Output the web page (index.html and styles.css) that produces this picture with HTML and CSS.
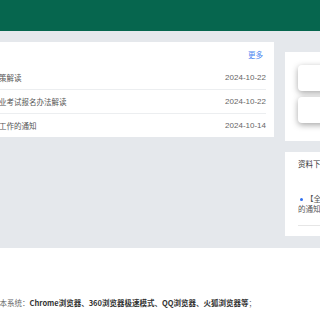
FILE: index.html
```html
<!DOCTYPE html>
<html lang="zh-CN">
<head>
<meta charset="utf-8">
<link rel="stylesheet" href="styles.css">
</head>
<body>
<div class="page">
  <header class="topbar"></header>
  <div class="main">
    <section class="news">
      <div class="news-head"><a class="more">更多</a></div>
      <div class="row"><span class="title">关于招生新政策解读</span><span class="date">2024-10-22</span></div>
      <div class="row"><span class="title">关于专升本专业考试报名办法解读</span><span class="date">2024-10-22</span></div>
      <div class="row"><span class="title">关于做好报名工作的通知</span><span class="date">2024-10-14</span></div>
    </section>
    <aside class="side">
      <div class="panel btns">
        <div class="btn"></div>
        <div class="btn"></div>
      </div>
      <div class="panel downloads">
        <div class="panel-title">资料下载</div>
        <div class="item"><span class="dot"></span>【全国】关于报名<br>的通知</div>
      </div>
    </aside>
  </div>
  <footer class="foot">
    <p class="tip">建议使用以下浏览器访问本系统：<b>Chrome浏览器、360浏览器极速模式、QQ浏览器、火狐浏览器等</b>；</p>
  </footer>
</div>
</body>
</html>
```

FILE: styles.css
```css
html, body {
  margin: 0;
  padding: 0;
  background: #ffffff;
  overflow: hidden;
  font-family: "Noto Sans CJK SC", "Noto Sans", sans-serif;
  font-size: 7.5px;
}
.page {
  width: 560px;
  margin-left: -100px;
}
.topbar {
  height: 31px;
  background: #06664e;
}
.main {
  background: #e5e8ec;
  display: flex;
  gap: 11px;
  padding: 11px 0 12px 40px;
}
.news {
  width: 334px;
  flex: none;
  background: #fff;
  padding: 0 8px 0 14px;
  box-sizing: border-box;
  align-self: flex-start;
}
.news-head {
  height: 24px;
  display: flex;
  justify-content: flex-end;
  align-items: center;
  padding-right: 3px;
}
.more {
  color: #4b86f0;
  font-size: 7.5px;
}
.row {
  height: 23px;
  display: flex;
  justify-content: space-between;
  align-items: center;
  border-bottom: 1px solid #eceef0;
  color: #555;
}
.row:last-child {
  border-bottom: none;
}
.date {
  color: #666;
  font-family: "Liberation Sans", sans-serif;
  font-size: 8px;
}
.side {
  flex: 1;
  display: flex;
  flex-direction: column;
  gap: 11px;
  margin-top: 10px;
}
.panel {
  background: #fff;
  padding-left: 13px;
}
.btns {
  padding-top: 13px;
  padding-bottom: 18px;
  display: flex;
  flex-direction: column;
  gap: 6px;
}
.btn {
  height: 26px;
  background: #fff;
  border-radius: 4px;
  box-shadow: 0 2px 6px rgba(0, 0, 0, 0.35);
}
.downloads {
  padding-top: 7px;
  padding-bottom: 10px;
  padding-right: 20px;
}
.panel-title {
  line-height: 10px;
  color: #333;
  font-size: 7.5px;
}
.item {
  margin-top: 25px;
  line-height: 10px;
  color: #555;
  padding-bottom: 11px;
  border-bottom: 1px solid #e6e6e6;
  white-space: nowrap;
}
.dot {
  display: inline-block;
  width: 3px;
  height: 3px;
  border-radius: 50%;
  background: #2f6ff0;
  margin: 0 3px 1px 2px;
  vertical-align: middle;
}
.foot {
  background: #fff;
  padding: 50px 0 0 17px;
  height: 75px;
  box-sizing: border-box;
}
.tip {
  margin: 0;
  line-height: 10px;
  color: #666;
}
.tip b {
  color: #333;
  font-weight: bold;
}
```
